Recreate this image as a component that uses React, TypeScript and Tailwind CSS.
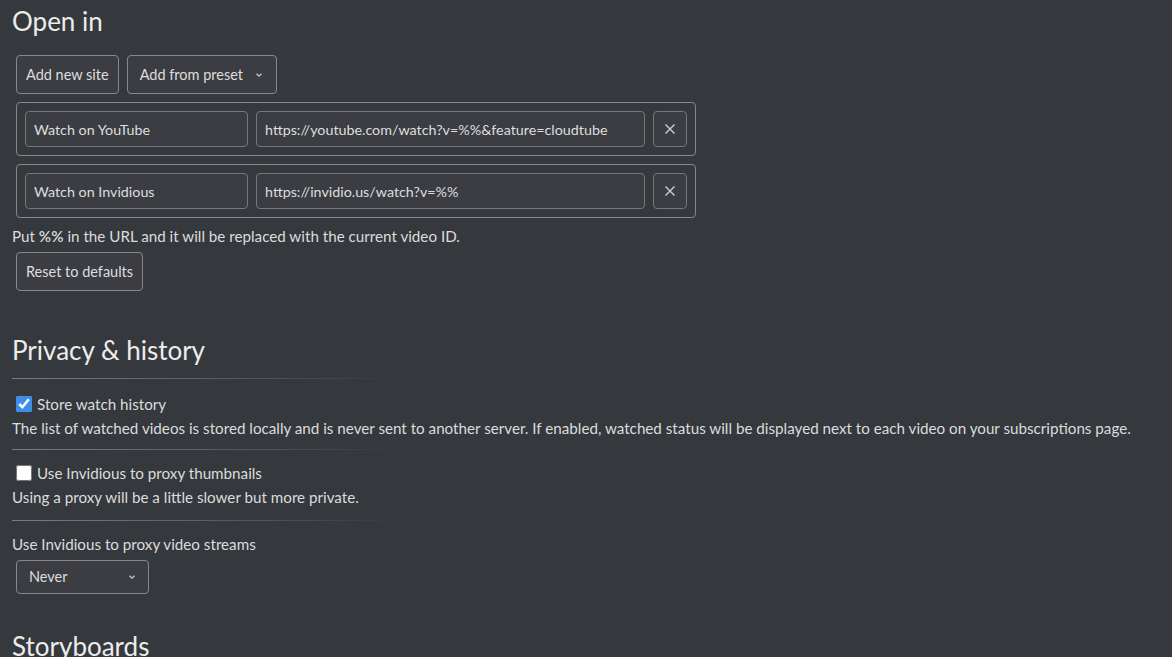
import React from "react";

function Chevron() {
  return (
    <svg width="8" height="6" viewBox="0 0 8 6" className="ml-3">
      <path d="M1.5 1.8 L4 4.2 L6.5 1.8" fill="none" stroke="#c8c8c8" strokeWidth="1.3" />
    </svg>
  );
}

function SiteRow({ name, url }: { name: string; url: string }) {
  return (
    <div className="flex items-center gap-2 w-[680px] border border-[#888] rounded-[4px] px-2 py-2">
      <input
        defaultValue={name}
        className="w-[223px] h-[36px] px-2 bg-[#3b3d42] border border-[#777] rounded-[4px] text-[14.3px] text-[#dedede] outline-none"
      />
      <input
        defaultValue={url}
        className="w-[389px] h-[36px] px-2 bg-[#3b3d42] border border-[#777] rounded-[4px] text-[14.3px] text-[#dedede] outline-none"
      />
      <button className="w-[34px] h-[36px] flex items-center justify-center bg-[#3b3d42] border border-[#777] rounded-[4px]">
        <svg width="12" height="12" viewBox="0 0 12 12">
          <path d="M1.5 1.5 L10.5 10.5 M10.5 1.5 L1.5 10.5" stroke="#d0d0d0" strokeWidth="1.4" />
        </svg>
      </button>
    </div>
  );
}

function Rule({ top }: { top: string }) {
  return <div className={`h-px w-[390px] ${top} bg-gradient-to-r from-[#7a7c80] via-[#5c5e62] to-transparent`} />;
}

export default function App() {
  return (
    <div
      className="min-h-screen bg-[#35383d] text-[#dcdcdc] px-3 pt-1 text-[15.2px]"
      style={{ fontFamily: "Lato, 'Noto Sans', sans-serif" }}
    >
      <h2 className="text-[26px] leading-[34px] text-[#ececec]">Open in</h2>

      <div className="flex gap-2 mt-[17px] ml-1 text-[14.5px]">
        <button className="h-[39px] px-[9px] bg-[#3b3d42] border border-[#888] rounded-[4px] text-[#dedede]">
          Add new site
        </button>
        <button className="h-[39px] pl-[12px] pr-[13px] flex items-center bg-[#3b3d42] border border-[#888] rounded-[4px] text-[#dedede]">
          Add from preset
          <Chevron />
        </button>
      </div>

      <div className="flex flex-col gap-2 mt-2 ml-1">
        <SiteRow name="Watch on YouTube" url="https://youtube.com/watch?v=%%&feature=cloudtube" />
        <SiteRow name="Watch on Invidious" url="https://invidio.us/watch?v=%%" />
      </div>

      <p className="mt-[7px] leading-[22px]">
        Put <b className="font-semibold">%%</b> in the URL and it will be replaced with the current video ID.
      </p>
      <button className="mt-[5px] ml-1 h-[39px] px-[9px] bg-[#3b3d42] border border-[#888] rounded-[4px] text-[14.5px] text-[#dedede]">
        Reset to defaults
      </button>

      <h2 className="mt-[42px] text-[26px] leading-[34px] text-[#ececec]">Privacy &amp; history</h2>
      <Rule top="mt-[11px]" />

      <label className="flex items-center gap-[5px] ml-1 mt-[14px] leading-[22px]">
        <input type="checkbox" defaultChecked className="w-[16px] h-[16px] accent-[#3d8ee6]" />
        Store watch history
      </label>
      <p className="leading-[26px]">
        The list of watched videos is stored locally and is never sent to another server. If enabled, watched status
        will be displayed next to each video on your subscriptions page.
      </p>
      <Rule top="mt-[8px]" />

      <label className="flex items-center gap-[5px] ml-1 mt-[12px] leading-[22px]">
        <input type="checkbox" className="w-[16px] h-[16px]" />
        Use Invidious to proxy thumbnails
      </label>
      <p className="leading-[26px]">Using a proxy will be a little slower but more private.</p>
      <Rule top="mt-[10px]" />

      <p className="mt-[10px] leading-[26px]">Use Invidious to proxy video streams</p>
      <div className="mt-[3px] ml-1 w-[133px] h-[34px] flex items-center justify-between px-3 bg-[#3b3d42] border border-[#888] rounded-[4px] text-[14.5px] text-[#dedede]">
        <span>Never</span>
        <Chevron />
      </div>

      <h2 className="mt-[35px] text-[26px] leading-[34px] text-[#ececec]">Storyboards</h2>
    </div>
  );
}
